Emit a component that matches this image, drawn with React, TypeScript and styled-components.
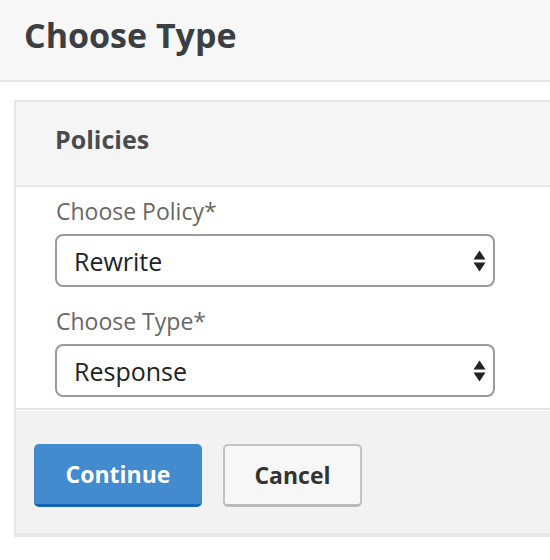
import { createGlobalStyle } from "styled-components";
import styled from "styled-components";

const GlobalStyle = createGlobalStyle`
  html, body {
    margin: 0;
    padding: 0;
    background: #ffffff;
    overflow: hidden;
  }
  body {
    font-family: "Open Sans", "Noto Sans", sans-serif;
  }
`;

const Page = styled.div`
  width: 550px;
  height: 560px;
  overflow: hidden;
`;

const Header = styled.header`
  box-sizing: border-box;
  height: 82px;
  padding: 12px 24px 0;
  background: #f7f7f7;
  border-bottom: 2px solid #e6e6e6;
`;

const Title = styled.h1`
  margin: 0;
  font-size: 34px;
  font-weight: 700;
  line-height: normal;
  color: #3b3e42;
`;

const Panel = styled.section`
  margin: 18px -40px 0 14px;
  border: 2px solid #e6e6e6;
  border-bottom-width: 4px;
  border-right: none;
`;

const PanelHeader = styled.div`
  box-sizing: border-box;
  height: 85px;
  padding: 20px 39px 0;
  background: #f5f5f5;
  border-bottom: 2px solid #e6e6e6;
`;

const PanelTitle = styled.h2`
  margin: 0;
  font-size: 25px;
  font-weight: 700;
  line-height: normal;
  color: #4a4b4f;
`;

const PanelBody = styled.div`
  display: flex;
  flex-direction: column;
  gap: 19px;
  padding: 9px 39px 11px;
  background: #ffffff;
  border-bottom: 2px solid #e6e6e6;
`;

const Field = styled.label`
  display: flex;
  flex-direction: column;
  gap: 8px;
`;

const FieldLabel = styled.span`
  padding-left: 1px;
  font-size: 23px;
  line-height: 30px;
  color: #676767;
`;

const SelectWrap = styled.div`
  position: relative;
  width: 440px;
`;

const Select = styled.select`
  box-sizing: border-box;
  width: 100%;
  height: 53px;
  padding: 0 40px 0 17px;
  appearance: none;
  -webkit-appearance: none;
  background: #ffffff;
  border: 2px solid #9a9a9a;
  border-radius: 8px;
  font-family: "Open Sans", "Noto Sans", sans-serif;
  font-size: 25px;
  color: #222222;
  outline: none;
`;

const Arrows = styled.svg`
  position: absolute;
  right: 8px;
  top: 50%;
  transform: translateY(-50%);
  pointer-events: none;
`;

const Footer = styled.div`
  display: flex;
  gap: 21px;
  padding: 34px 18px 26px;
  background: #f2f2f2;
  box-shadow: inset 0 1px 0 #ffffff;
`;

const Button = styled.button<{ $primary?: boolean }>`
  box-sizing: border-box;
  height: 63px;
  padding: 0 28px;
  border-radius: 5px;
  font-family: "Open Sans", "Noto Sans", sans-serif;
  font-size: 23px;
  font-weight: 700;
  cursor: pointer;
  background: ${(p) => (p.$primary ? "#428bcf" : "#f7f7f7")};
  color: ${(p) => (p.$primary ? "#ffffff" : "#333333")};
  border: ${(p) => (p.$primary ? "none" : "2px solid #c2c2c2")};
  border-bottom: ${(p) =>
    p.$primary ? "3px solid #1465b8" : "3px solid #bababa"};
  width: ${(p) => (p.$primary ? "168px" : "139px")};
`;

function UpDown() {
  return (
    <Arrows width="15" height="25" viewBox="0 0 15 25">
      <path d="M7.5 2 L13.5 11 H1.5 Z" fill="#222" />
      <path d="M7.5 23 L13.5 14 H1.5 Z" fill="#222" />
    </Arrows>
  );
}

export default function App() {
  return (
    <Page>
      <GlobalStyle />
      <Header>
        <Title>Choose Type</Title>
      </Header>

      <Panel>
        <PanelHeader>
          <PanelTitle>Policies</PanelTitle>
        </PanelHeader>

        <PanelBody>
          <Field>
            <FieldLabel>Choose Policy*</FieldLabel>
            <SelectWrap>
              <Select defaultValue="rewrite">
                <option value="rewrite">Rewrite</option>
                <option value="responder">Responder</option>
              </Select>
              <UpDown />
            </SelectWrap>
          </Field>

          <Field>
            <FieldLabel>Choose Type*</FieldLabel>
            <SelectWrap>
              <Select defaultValue="response">
                <option value="request">Request</option>
                <option value="response">Response</option>
              </Select>
              <UpDown />
            </SelectWrap>
          </Field>
        </PanelBody>

        <Footer>
          <Button $primary>Continue</Button>
          <Button>Cancel</Button>
        </Footer>
      </Panel>
    </Page>
  );
}
